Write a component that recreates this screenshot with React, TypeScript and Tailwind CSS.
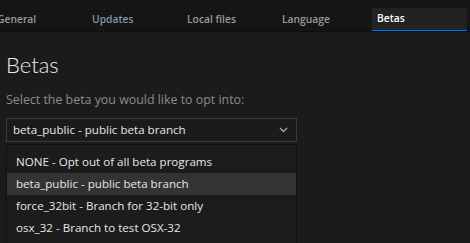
import React from 'react';

const TABS = ['General', 'Updates', 'Local files', 'Language', 'Betas'];

const OPTIONS = [
  'NONE - Opt out of all beta programs',
  'beta_public - public beta branch',
  'force_32bit - Branch for 32-bit only',
  'osx_32 - Branch to test OSX-32',
];

export default function App() {
  const active = 'Betas';
  const selected = 'beta_public - public beta branch';

  return (
    <div
      className="w-[470px] h-[243px] overflow-hidden bg-[#1b1b1b] text-[#e6e6e6]"
      style={{ fontFamily: '"Open Sans", "Noto Sans", sans-serif' }}
    >
      {/* Tabs */}
      <div className="h-[32px] bg-[#151515] border-b border-[#0e0e0e] flex items-end -ml-[8px]">
        {TABS.map((tab) => (
          <div
            key={tab}
            className={`w-[95px] h-[23px] shrink-0 flex items-center pl-[5px] text-[10.3px] font-semibold ${
              tab === active
                ? 'bg-[#222222] text-white border-b border-[#1f6fb2]'
                : tab === 'Updates'
                  ? 'text-[#8096ad]'
                  : 'text-[#9a9a9a]'
            }`}
          >
            {tab}
          </div>
        ))}
      </div>

      {/* Contenido */}
      <div className="px-[6px]">
        <h1
          className="mt-[17px] text-[22px] leading-[32px] font-light text-[#ececec]"
          style={{ fontFamily: 'Lato, "Open Sans", sans-serif' }}
        >
          Betas
        </h1>
        <p className="mt-[10px] text-[12.4px] leading-[18px] text-[#8c8c8c]">
          Select the beta you would like to opt into:
        </p>

        <div className="mt-[9px] w-[291px] h-[24px] border border-[#3a3a3a] flex items-center justify-between pl-[6px] pr-[8px] text-[11.6px]">
          <span>{selected}</span>
          <svg width="9" height="6" viewBox="0 0 9 6" fill="none">
            <path d="M1 1 L4.5 4.5 L8 1" stroke="#a0a0a0" strokeWidth="1.4" />
          </svg>
        </div>

        <div className="mt-[2px] w-[291px] h-[120px] bg-[#1c1c1c] border border-[#101010] pt-[6px]">
          {OPTIONS.map((opt) => (
            <div
              key={opt}
              className={`h-[22px] flex items-center pl-[9px] text-[11.6px] ${
                opt === selected ? 'bg-[#333333]' : ''
              }`}
            >
              {opt}
            </div>
          ))}
        </div>
      </div>
    </div>
  );
}
